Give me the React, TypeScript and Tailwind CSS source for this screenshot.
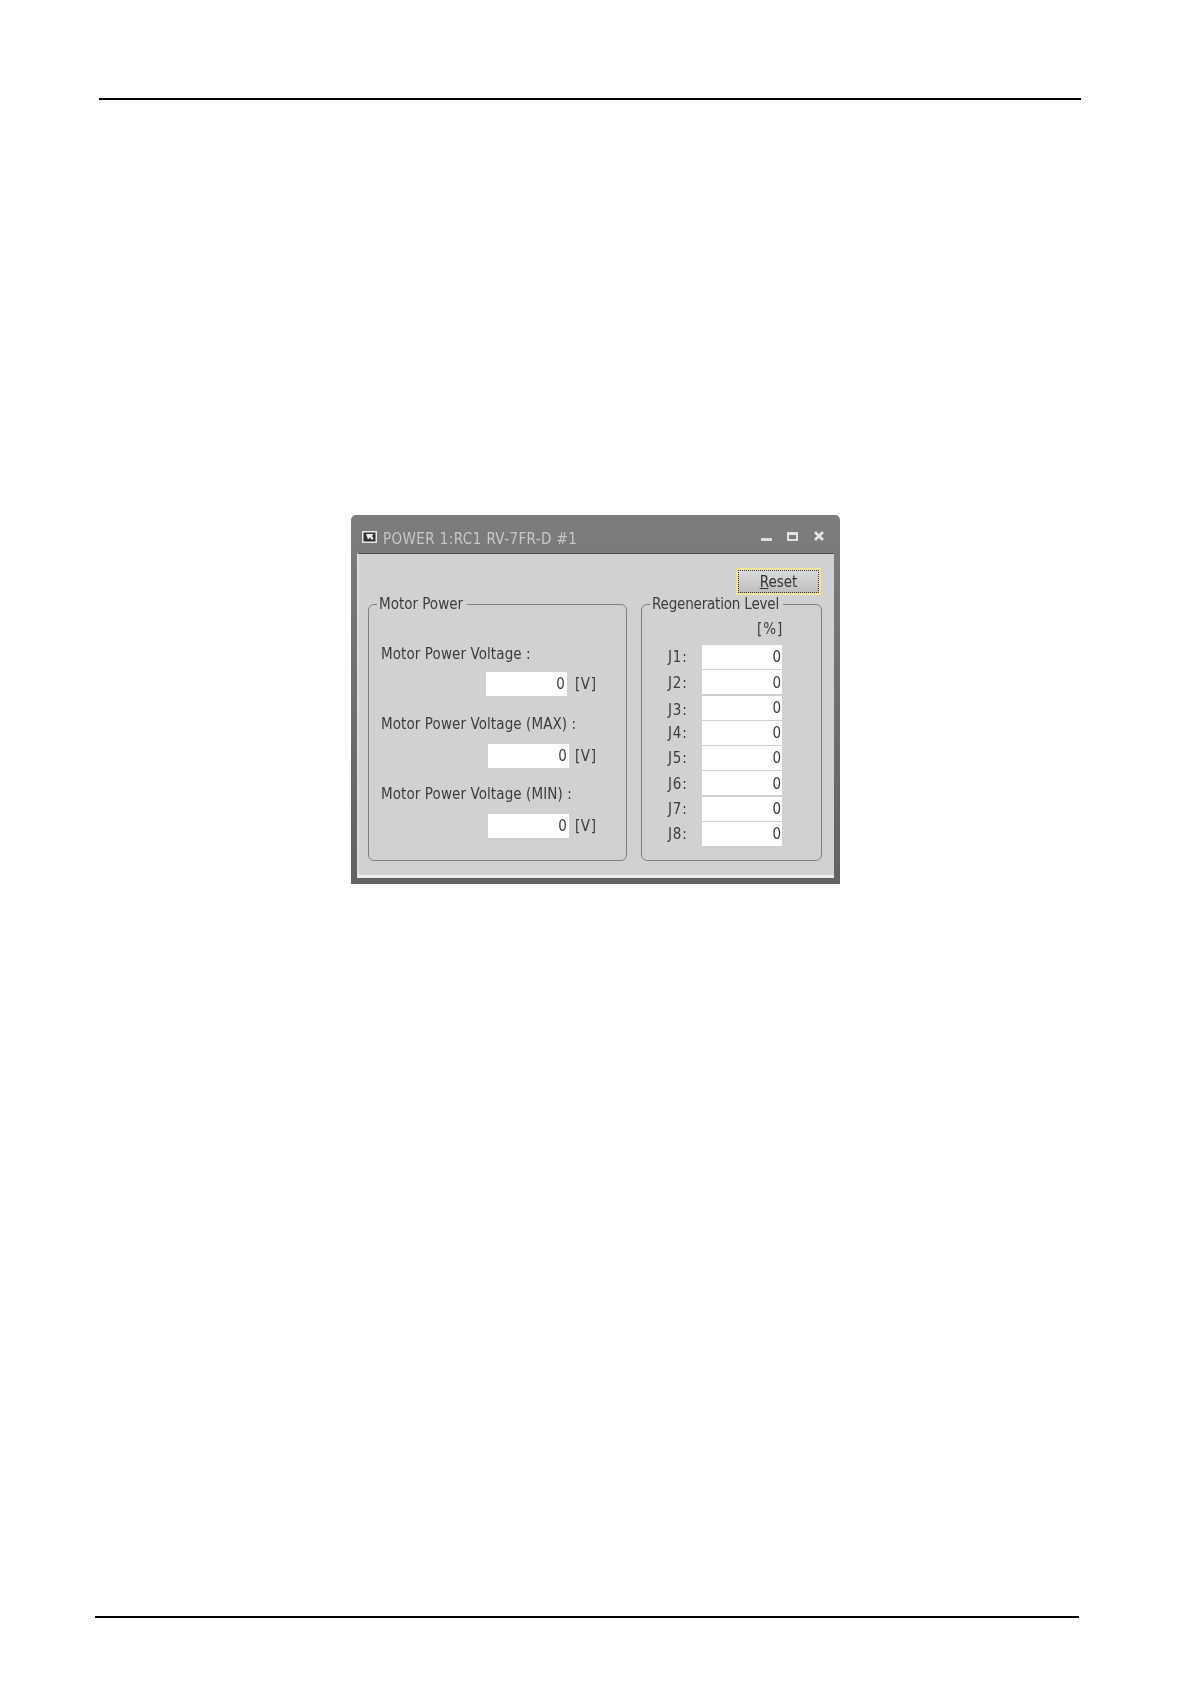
const ui = { fontFamily: '"DejaVu Sans", sans-serif' };

const voltageRows = [
  { label: 'Motor Power Voltage :', labelGap: 'mt-[33px]', inputGap: 'mt-[9px]', input: 'ml-[105px]', unit: 'ml-[8px]' },
  { label: 'Motor Power Voltage (MAX) :', labelGap: 'mt-[19px]', inputGap: 'mt-[11px]', input: 'ml-[107px]', unit: 'ml-[6px]' },
  { label: 'Motor Power Voltage (MIN) :', labelGap: 'mt-[17px]', inputGap: 'mt-[11px]', input: 'ml-[107px]', unit: 'ml-[6px]' },
];

const joints = ['J1:', 'J2:', 'J3:', 'J4:', 'J5:', 'J6:', 'J7:', 'J8:'];

function Group({ title, className, children }: { title: string; className: string; children: React.ReactNode }) {
  return (
    <fieldset className={`h-[265px] rounded-[6px] border border-[#808080] ${className}`}>
      <legend className="ml-[8px] pl-[2px] pr-[4px] leading-[16px]">{title}</legend>
      {children}
    </fieldset>
  );
}

function Field({ className }: { className: string }) {
  return (
    <div className={`flex h-[24px] items-center justify-end bg-white pt-px ${className}`}>0</div>
  );
}

export default function App() {
  return (
    <div className="flex min-h-[1684px] flex-col bg-white pt-[98px]" style={ui}>
      <div className="ml-[99px] mr-[110px] h-[2px] bg-black" />

      <div className="mx-auto mt-[415px] flex h-[369px] w-[489px] flex-col rounded-t-[5px] bg-gradient-to-b from-[#7d7d7d] to-[#626262] px-[6px] pb-[6px] blur-[0.5px]">
        <div className="flex h-[38px] shrink-0 items-center pl-[5px] pr-[10px] pt-[9px] text-[#c8c8c8]">
          <svg width="15" height="12" viewBox="0 0 15 12" className="mt-[-3px] shrink-0">
            <rect x="0.75" y="0.75" width="13.5" height="10.5" fill="#333333" stroke="#e8e8e8" strokeWidth="1.5" />
            <path d="M4 3h7.5L10 5l1.5 2.5-1.5 1.5L8 6.5 6 8.5z" fill="#ededed" />
          </svg>
          <span className="ml-[6px] text-[15px] leading-[18px] tracking-[0.42px] [font-stretch:condensed]">POWER 1:RC1 RV-7FR-D #1</span>
          <div className="ml-auto mt-[-5px] flex items-center">
            <div className="mt-[6px] h-[3px] w-[11px] bg-[#dcdcdc]" />
            <div className="ml-[15px] h-[9px] w-[11px] border-2 border-t-[3px] border-[#e2e2e2]" />
            <svg width="10" height="10" viewBox="0 0 10 10" className="ml-[16px]">
              <path d="M1 1l8 8M9 1l-8 8" stroke="#e6e6e6" strokeWidth="2.6" />
            </svg>
          </div>
        </div>

        <div className="flex-1 border-b-[3px] border-b-[#efefef] border-l-2 border-l-[#dcdcdc] border-t border-t-[#4a4a4a] bg-[#d1d1d1] pl-[9px] pr-[12px] pt-[14px] text-[15px] text-[#3c3c3c] [font-stretch:condensed]">
          <div className="flex justify-end pr-px">
            <button className="flex h-[27px] w-[85px] items-center justify-center border-2 border-[#efe49a] bg-gradient-to-b from-[#dcdcdc] to-[#bdbdbd] text-[#333]">
              <span className="flex h-[23px] w-[81px] items-center justify-center border border-dotted border-[#333] pt-px">
                <span><span className="underline">R</span>eset</span>
              </span>
            </button>
          </div>

          <div className="mt-px flex gap-[14px]">
            <Group title="Motor Power" className="w-[259px]">
              <div className="pl-[12px] tracking-[0.1px]">
                {voltageRows.map((row) => (
                  <div key={row.label}>
                    <div className={`h-[18px] leading-[18px] ${row.labelGap}`}>{row.label}</div>
                    <div className={`flex items-center ${row.inputGap}`}>
                      <Field className={`w-[81px] pr-[2px] ${row.input}`} />
                      <span className={`tracking-[0.6px] ${row.unit}`}>[V]</span>
                    </div>
                  </div>
                ))}
              </div>
            </Group>

            <Group title="Regeneration Level" className="w-[181px] tracking-[-0.18px]">
              <div className="pl-[25px] tracking-normal">
                <div className="mb-[7px] mt-[8px] h-[18px] pl-[90px] leading-[18px] tracking-[1px]">[%]</div>
                <div className="flex flex-col gap-[1.25px]">
                  {joints.map((joint) => (
                    <div key={joint} className="flex h-[24px] items-center">
                      <span className={`w-[35px] pl-px tracking-[0.8px] ${joint === 'J3:' ? 'pt-[5px]' : 'pt-px'}`}>{joint}</span>
                      <Field className="w-[80px] pr-[1px]" />
                    </div>
                  ))}
                </div>
              </div>
            </Group>
          </div>
        </div>
      </div>

      <div className="ml-[95px] mr-[112px] mt-[732px] h-[2px] bg-black" />
    </div>
  );
}
